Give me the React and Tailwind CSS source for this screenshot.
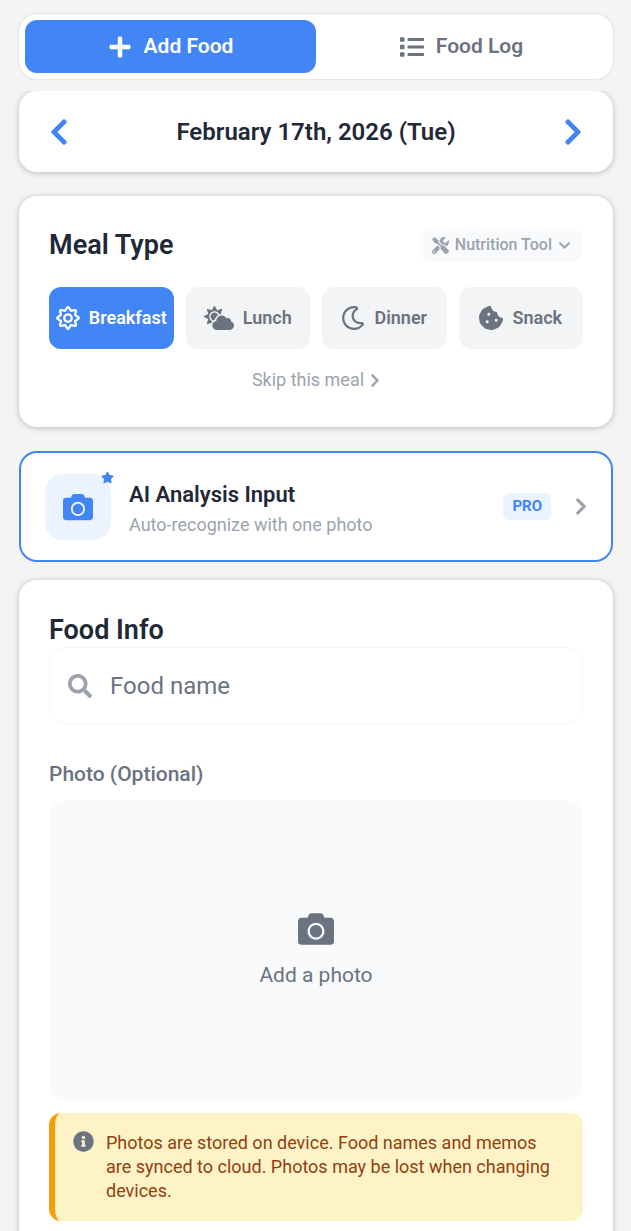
import { useState } from "react";
import {
  FaCamera,
  FaChevronDown,
  FaChevronLeft,
  FaChevronRight,
  FaCloudSun,
  FaCookieBite,
  FaInfoCircle,
  FaList,
  FaPlus,
  FaRegMoon,
  FaRegSun,
  FaSearch,
  FaStar,
  FaTools,
} from "react-icons/fa";

const meals = [
  { id: "breakfast", label: "Breakfast", Icon: FaRegSun, iconClass: "w-6 h-6" },
  { id: "lunch", label: "Lunch", Icon: FaCloudSun, iconClass: "w-[30px] h-6" },
  { id: "dinner", label: "Dinner", Icon: FaRegMoon, iconClass: "w-6 h-6" },
  { id: "snack", label: "Snack", Icon: FaCookieBite, iconClass: "w-6 h-6" },
];

const tabs = [
  { id: "add", label: "Add Food", Icon: FaPlus },
  { id: "log", label: "Food Log", Icon: FaList },
];

function Card({ className = "", children }) {
  return (
    <section
      className={`bg-white rounded-[18px] shadow-[0_1px_6px_rgba(0,0,0,0.24)] ${className}`}
    >
      {children}
    </section>
  );
}

export default function App() {
  const [tab, setTab] = useState("add");
  const [meal, setMeal] = useState("breakfast");
  const [foodName, setFoodName] = useState("");

  return (
    <div className="flex flex-col h-screen bg-[#f4f4f4] font-[Roboto,sans-serif] text-[#1f2937]">
      <header className="pl-[19px] pr-[18px] pt-[14px] pb-3">
        <nav className="flex p-[6px] bg-white rounded-[18px] shadow-[0_0_2px_rgba(0,0,0,0.2)]">
          {tabs.map(({ id, label, Icon }) => (
            <button
              key={id}
              type="button"
              onClick={() => setTab(id)}
              className={`flex flex-1 items-center justify-center gap-3 h-[53px] rounded-xl text-[21px] font-semibold ${
                tab === id ? "bg-[#4285f4] text-white" : "text-[#6b7280]"
              }`}
            >
              <Icon className="w-6 h-6" />
              {label}
            </button>
          ))}
        </nav>
      </header>

      <main className="flex-1 overflow-y-auto [scrollbar-width:none] pl-[19px] pr-[18px] pb-6">
        <Card className="flex items-center justify-between h-[81px] px-[30px]">
          <button type="button" aria-label="Previous day" className="text-[#4285f4]">
            <FaChevronLeft className="w-5 h-[30px]" />
          </button>
          <h1 className="text-2xl font-semibold">February 17th, 2026 (Tue)</h1>
          <button type="button" aria-label="Next day" className="text-[#4285f4]">
            <FaChevronRight className="w-5 h-[30px]" />
          </button>
        </Card>

        <Card className="mt-6 px-[30px] pt-[31px] pb-[33px]">
          <div className="flex items-center justify-between">
            <h2 className="text-[27px] leading-9 font-semibold">Meal Type</h2>
            <button
              type="button"
              className="flex items-center gap-[6px] h-[34px] px-3 rounded-xl bg-[#f9fafb] text-base font-medium text-[#9ca3af]"
            >
              <FaTools className="w-[17px] h-[17px]" />
              Nutrition Tool
              <FaChevronDown className="w-[13px] h-[13px]" />
            </button>
          </div>

          <div className="grid grid-cols-4 gap-3 mt-6">
            {meals.map(({ id, label, Icon, iconClass }) => (
              <button
                key={id}
                type="button"
                onClick={() => setMeal(id)}
                className={`flex items-center justify-center gap-[9px] h-[62px] rounded-xl text-lg font-semibold ${
                  meal === id ? "bg-[#4285f4] text-white" : "bg-[#f3f4f6] text-[#6b7280]"
                }`}
              >
                <Icon className={`shrink-0 ${iconClass}`} />
                {label}
              </button>
            ))}
          </div>

          <button
            type="button"
            className="flex items-center gap-[6px] mx-auto mt-[17px] text-lg text-[#9ca3af]"
          >
            Skip this meal
            <FaChevronRight className="w-[10px] h-[15px]" />
          </button>
        </Card>

        <button
          type="button"
          className="flex items-center w-full h-[111px] mt-6 px-6 text-left bg-white border-2 border-[#4285f4] rounded-[18px]"
        >
          <span className="relative flex items-center justify-center w-[66px] h-[66px] rounded-[18px] bg-[#ebf3ff] text-[#4285f4]">
            <FaCamera className="w-[30px] h-[30px]" />
            <FaStar className="absolute -top-[3px] -right-[3px] w-[13px] h-[13px]" />
          </span>
          <span className="flex flex-col flex-1 ml-[18px] pt-1">
            <span className="text-[22px] leading-8 font-semibold">AI Analysis Input</span>
            <span className="text-lg leading-7 text-[#9ca3af]">Auto-recognize with one photo</span>
          </span>
          <span className="px-[9px] rounded-md bg-[#ebf3ff] text-[15px] leading-[27px] font-bold text-[#4285f4]">
            PRO
          </span>
          <FaChevronRight className="w-3 h-[21px] ml-6 text-[#9ca3af]" />
        </button>

        <Card className="mt-[18px] px-[30px] pt-[33px] pb-8">
          <h2 className="text-[27px] leading-[34px] font-semibold">Food Info</h2>
          <label className="flex items-center gap-[18px] h-[77px] px-[18px] border border-[#f5f6f8] rounded-[18px]">
            <FaSearch className="shrink-0 w-6 h-6 text-[#9ca3af]" />
            <input
              type="text"
              aria-label="Food name"
              placeholder="Food name"
              value={foodName}
              onChange={(e) => setFoodName(e.target.value)}
              className="w-full text-2xl placeholder:text-[#6b7280] focus:outline-none"
            />
          </label>

          <h3 className="mt-9 text-[21px] leading-7 font-medium text-[#6b7280]">
            Photo (Optional)
          </h3>
          <button
            type="button"
            className="flex flex-col items-center justify-center gap-3 w-full h-[301px] mt-3 rounded-[18px] bg-[#f9fafb] text-[21px] leading-8 text-[#6b7280]"
          >
            <FaCamera className="w-9 h-9" />
            Add a photo
          </button>

          <div className="flex gap-3 mt-3 pl-[18px] pr-6 py-[18px] border-l-6 border-[#f59e0b] rounded-xl bg-[#fef3c7] text-lg leading-6 text-[#92400e]">
            <FaInfoCircle className="shrink-0 w-[21px] h-[21px] text-[#6b7280]" />
            <p>
              Photos are stored on device. Food names and memos are synced to cloud. Photos may be
              lost when changing devices.
            </p>
          </div>
        </Card>
      </main>
    </div>
  );
}
